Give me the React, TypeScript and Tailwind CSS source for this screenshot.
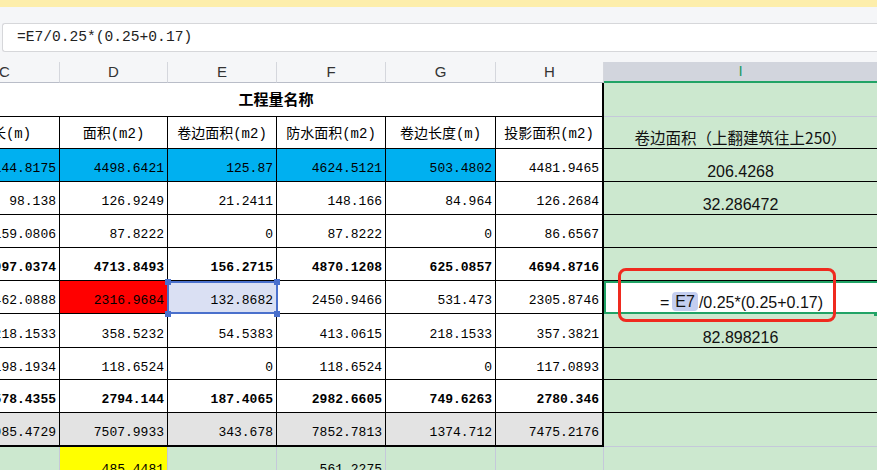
import React from 'react';

const W = ['w-[110px]', 'w-[108px]', 'w-[109px]', 'w-[109px]', 'w-[110px]', 'w-[108px]'];
const LETTERS = ['C', 'D', 'E', 'F', 'G', 'H'];
const MONO = "font-['Liberation_Mono','Noto_Sans_CJK_SC',monospace]";
const SANS = "font-['Liberation_Sans','Noto_Sans_CJK_SC',sans-serif]";
const CJK = "font-['Noto_Sans_CJK_SC','Liberation_Sans',sans-serif]";

type Row = {
  h: string;
  cells: string[];
  bg?: string[];
  bold?: boolean;
  thick?: boolean;
  i?: string;
  iLine?: string;
  edit?: boolean;
};

const BLUE = 'bg-[#00b0f0]';
const GRAY = 'bg-[#e3e3e3]';

const rows: Row[] = [
  { h: 'h-[33px]', cells: ['144.8175', '4498.6421', '125.87', '4624.5121', '503.4802', '4481.9465'], bg: [BLUE, BLUE, BLUE, BLUE, BLUE, 'bg-white'], i: '206.4268' },
  { h: 'h-[33px]', cells: ['98.138', '126.9249', '21.2411', '148.166', '84.964', '126.2684'], i: '32.286472' },
  { h: 'h-[33px]', cells: ['159.0806', '87.8222', '0', '87.8222', '0', '86.6567'] },
  { h: 'h-[33px]', bold: true, cells: ['997.0374', '4713.8493', '156.2715', '4870.1208', '625.0857', '4694.8716'] },
  { h: 'h-[33px]', cells: ['462.0888', '2316.9684', '132.8682', '2450.9466', '531.473', '2305.8746'], bg: ['bg-white', 'bg-[#ff0000]', 'bg-[#dae0f3]', 'bg-white', 'bg-white', 'bg-white'], edit: true },
  { h: 'h-[34px]', cells: ['218.1533', '358.5232', '54.5383', '413.0615', '218.1533', '357.3821'], i: '82.898216' },
  { h: 'h-[32px]', cells: ['198.1934', '118.6524', '0', '118.6524', '0', '117.0893'] },
  { h: 'h-[33px]', bold: true, cells: ['578.4355', '2794.144', '187.4065', '2982.6605', '749.6263', '2780.346'] },
  { h: 'h-[34px]', thick: true, cells: ['985.4729', '7507.9933', '343.678', '7852.7813', '1374.712', '7475.2176'], bg: [GRAY, GRAY, GRAY, GRAY, GRAY, GRAY], iLine: 'border-[#c5c8da]' },
];

const App = () => {
  return (
    <div className="relative w-[877px] h-[470px] overflow-hidden bg-[#f5f6f8] text-black">
      <div className="h-[7px] bg-[#fdeeab]" />
      <div className="pt-[16px] pb-[10px] pl-[2px]">
        <div className={`h-[29px] bg-white border border-r-0 border-[#d6d7da] rounded-l-[3px] flex items-center pl-[14px] text-[14.6px] text-[#222] ${MONO}`}>
          =E7/0.25*(0.25+0.17)
        </div>
      </div>

      <div className="ml-[-50px] w-[927px]">
        {/* column letters */}
        <div className="flex h-[21px]">
          {LETTERS.map((l, i) => (
            <div key={l} className={`${W[i]} shrink-0 flex items-center justify-center border-r border-[#d5d7dd] border-b border-b-[#b9bdc8] text-[15px] text-[#333] ${SANS}`}>
              {l}
            </div>
          ))}
          <div className={`flex-1 bg-[#d2d5dd] border-b-2 border-[#21a366] flex items-center justify-center text-[15px] text-[#1b9b63] ${SANS}`}>I</div>
        </div>

        {/* merged title */}
        <div className="flex h-[34px]">
          <div className={`w-[654px] shrink-0 bg-white border-b border-b-black border-r-2 border-r-black flex items-center justify-center font-bold text-[15px] ${CJK}`}>
            工程量名称
          </div>
          <div className="flex-1 bg-[#cce8cf] border-b border-[#c5c8da]" />
        </div>

        {/* labels */}
        <div className="flex h-[32px]">
          {['周长(m)', '面积(m2)', '卷边面积(m2)', '防水面积(m2)', '卷边长度(m)', '投影面积(m2)'].map((t, i) => (
            <div key={t} className={`${W[i]} shrink-0 bg-white border-b border-black ${i === 5 ? 'border-r-2' : 'border-r'} flex items-center justify-center pt-[4px] text-[14px] ${MONO}`}>
              {t}
            </div>
          ))}
          <div className={`flex-1 bg-[#cce8cf] border-b border-black flex items-end justify-center pb-[3px] leading-none text-[15.5px] text-[#111] ${CJK}`}>
            卷边面积（上翻建筑往上250）
          </div>
        </div>

        {rows.map((r, ri) => (
          <div key={ri} className={`flex ${r.h}`}>
            {r.cells.map((c, i) => (
              <div
                key={i}
                className={`${W[i]} shrink-0 ${r.bg ? r.bg[i] : 'bg-white'} ${r.thick ? 'border-b-2' : 'border-b'} border-black ${i === 5 ? 'border-r-2' : 'border-r'} flex items-center justify-end pt-[8px] pr-[3px] text-[13px] ${r.bold ? 'font-bold' : ''} ${MONO}`}
              >
                {c}
              </div>
            ))}
            {r.edit ? (
              <div className={`flex-1 bg-white border-y-2 border-l-2 border-[#21a366] flex items-end justify-center leading-none pb-[1px] text-[16px] text-[#111] ${SANS}`}>
                <span>=</span>
                <span className="bg-[#c4cef0] rounded-[4px] px-[3px] ml-[3px] mr-[1px] pt-[2px] pb-[1px]">E7</span>
                <span>/0.25*(0.25+0.17)</span>
              </div>
            ) : (
              <div className={`flex-1 bg-[#cce8cf] border-b ${r.iLine ?? 'border-black'} flex items-end justify-center leading-none pb-[1px] text-[16px] text-[#111] ${SANS}`}>
                {r.i ?? ''}
              </div>
            )}
          </div>
        ))}

        {/* last partly visible row */}
        <div className="flex h-[33px]">
          {['', '485.4481', '', '561.2275', '', ''].map((c, i) => (
            <div key={i} className={`${W[i]} shrink-0 ${i === 1 ? 'bg-[#ffff00]' : 'bg-[#cce8cf]'} border-r border-[#c5c8da] flex items-start justify-end pt-[13px] pr-[3px] text-[13px] ${MONO}`}>
              {c}
            </div>
          ))}
          <div className="flex-1 bg-[#cce8cf]" />
        </div>
      </div>

      {/* selected cell E7 */}
      <div className="absolute left-[167px] top-[281px] w-[111px] h-[33px] border-2 border-[#4a70cc]" />
      <div className="absolute left-[165px] top-[279px] w-[6px] h-[6px] bg-[#4a70cc]" />
      <div className="absolute left-[274px] top-[279px] w-[6px] h-[6px] bg-[#4a70cc]" />
      <div className="absolute left-[165px] top-[311px] w-[6px] h-[6px] bg-[#4a70cc]" />
      <div className="absolute left-[274px] top-[311px] w-[6px] h-[6px] bg-[#4a70cc]" />

      {/* fill handle of edited cell */}
      <div className="absolute left-[874px] top-[312px] w-[4px] h-[4px] bg-[#21a366]" />

      {/* red annotation */}
      <div className="absolute left-[618px] top-[268px] w-[218px] h-[54px] border-[3px] border-[#ef2a1f] rounded-[8px]" />
    </div>
  );
};

export default App;
